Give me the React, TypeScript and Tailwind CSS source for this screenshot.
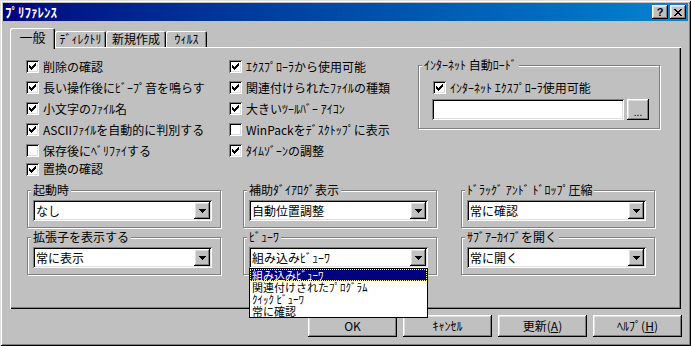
import React from 'react';

// win98 bevels
const raised = 'shadow-[inset_-1px_-1px_0_#000,inset_1px_1px_0_#fff,inset_-2px_-2px_0_#808080,inset_2px_2px_0_#dfdfdf]';
const sunken = 'shadow-[inset_1px_1px_0_#808080,inset_-1px_-1px_0_#fff,inset_2px_2px_0_#000,inset_-2px_-2px_0_#dfdfdf]';

const checkPx = [[6, 0, 1], [5, 1, 2], [0, 2, 1], [4, 2, 3], [0, 3, 2], [3, 3, 3], [0, 4, 5], [1, 5, 3], [2, 6, 1]];
const closePx = [[0, 0, 2], [6, 0, 2], [1, 1, 2], [5, 1, 2], [2, 2, 4], [3, 3, 2], [2, 4, 4], [1, 5, 2], [5, 5, 2], [0, 6, 2], [6, 6, 2]];
const arrowPx = [[0, 0, 7], [1, 1, 5], [2, 2, 3], [3, 3, 1]];

const Pixels: React.FC<{ px: number[][]; w: number; h: number }> = ({ px, w, h }) => (
  <svg width={w} height={h} viewBox={`0 0 ${w} ${h}`} shapeRendering="crispEdges">
    {px.map(([x, y, len], i) => (
      <rect key={i} x={x} y={y} width={len} height={1} fill="#000" />
    ))}
  </svg>
);

const Check: React.FC<{ checked: boolean }> = ({ checked }) => (
  <span className={`w-[13px] h-[13px] bg-white shrink-0 flex items-center justify-center ${sunken}`}>
    {checked && <Pixels px={checkPx} w={7} h={7} />}
  </span>
);

const CheckRow: React.FC<{ label: string; checked?: boolean; className?: string }> = ({ label, checked = true, className = 'h-[21px]' }) => (
  <div className={`flex items-center gap-[4px] whitespace-nowrap ${className}`}>
    <Check checked={checked} />
    <span>{label}</span>
  </div>
);

const Group: React.FC<{ label: string; className?: string; children?: React.ReactNode }> = ({ label, className = '', children }) => (
  <div className={`relative border border-[#808080] shadow-[1px_1px_0_#fff,inset_1px_1px_0_#fff] ${className}`}>
    <span className="absolute left-[3px] -top-[8px] bg-[#c0c0c0] px-[2px] whitespace-nowrap">{label}</span>
    {children}
  </div>
);

const Combo: React.FC<{ value: string; children?: React.ReactNode }> = ({ value, children }) => (
  <div className={`relative mt-[9px] ml-[5px] w-[179px] h-[21px] bg-white flex items-center pl-[3px] pr-[2px] ${sunken}`}>
    <span className="flex-1 whitespace-nowrap">{value}</span>
    <span className={`w-[16px] h-[17px] bg-[#c0c0c0] flex items-center justify-center ${raised}`}>
      <Pixels px={arrowPx} w={7} h={4} />
    </span>
    {children}
  </div>
);

const Button: React.FC<{ children: React.ReactNode; className?: string }> = ({ children, className = 'w-[89px] h-[22px]' }) => (
  <button className={`bg-[#c0c0c0] flex items-center justify-center shrink-0 ${raised} ${className}`}>{children}</button>
);

const viewerItems = ['組み込みﾋﾞｭｰﾜ', '関連付けされたﾌﾟﾛｸﾞﾗﾑ', 'ｸｲｯｸ ﾋﾞｭｰﾜ', '常に確認'];

export default function App() {
  return (
    <div className={`w-[691px] h-[346px] bg-[#c0c0c0] p-[3px] text-[12px] leading-[14px] text-black font-['Noto_Sans_CJK_JP',sans-serif] shadow-[inset_1px_1px_0_#dfdfdf,inset_-1px_-1px_0_#000,inset_2px_2px_0_#fff,inset_-2px_-2px_0_#808080]`}>
      {/* Title bar */}
      <div className="h-[18px] flex items-center bg-linear-to-r from-[#000080] to-[#1084d0] pl-[2px] pr-[2px]">
        <span className="flex-1 text-white font-bold text-[13px]">ﾌﾟﾘﾌｧﾚﾝｽ</span>
        <div className="flex gap-[2px]">
          <span className={`w-[16px] h-[14px] bg-[#c0c0c0] flex items-center justify-center font-bold text-[11px] leading-[11px] font-['Liberation_Sans',sans-serif] ${raised}`}>?</span>
          <span className={`w-[16px] h-[14px] bg-[#c0c0c0] flex items-center justify-center ${raised}`}>
            <Pixels px={closePx} w={8} h={7} />
          </span>
        </div>
      </div>

      <div className="px-[7px] pt-[7px]">
        {/* Tabs */}
        <div className="flex items-end h-[19px]">
          <div className="relative z-10 w-[45px] h-[21px] -mb-[2px] bg-[#c0c0c0] rounded-t-[2px] pt-[2px] text-center text-[13px] shadow-[inset_1px_1px_0_#fff,inset_-1px_0_0_#000,inset_-2px_0_0_#808080]">一般</div>
          <div className="w-[51px] h-[16px] pt-[1px] text-center rounded-t-[2px] shadow-[inset_1px_1px_0_#fff,inset_-1px_0_0_#000,inset_-2px_0_0_#808080]">ﾃﾞｨﾚｸﾄﾘ</div>
          <div className="w-[60px] h-[16px] pt-[1px] text-center rounded-t-[2px] shadow-[inset_1px_1px_0_#fff,inset_-1px_0_0_#000,inset_-2px_0_0_#808080]">新規作成</div>
          <div className="w-[41px] h-[16px] pt-[1px] text-center rounded-t-[2px] shadow-[inset_1px_1px_0_#fff,inset_-1px_0_0_#000,inset_-2px_0_0_#808080]">ｳｨﾙｽ</div>
        </div>

        {/* Panel */}
        <div className="relative h-[262px] shadow-[inset_1px_1px_0_#fff,inset_-1px_-1px_0_#000,inset_-2px_-2px_0_#808080]">
          <div className="flex pt-[9px] pl-[16px]">
            <div className="w-[203px] flex flex-col">
              <CheckRow label="削除の確認" />
              <CheckRow label="長い操作後にﾋﾞｰﾌﾟ音を鳴らす" />
              <CheckRow label="小文字のﾌｧｲﾙ名" />
              <CheckRow label="ASCIIﾌｧｲﾙを自動的に判別する" />
              <CheckRow label="保存後にﾍﾞﾘﾌｧｲする" checked={false} />
              <CheckRow label="置換の確認" className="h-[16px]" />
            </div>
            <div className="w-[189px] flex flex-col">
              <CheckRow label="ｴｸｽﾌﾟﾛｰﾗから使用可能" />
              <CheckRow label="関連付けられたﾌｧｲﾙの種類" />
              <CheckRow label="大きいﾂｰﾙﾊﾞｰ ｱｲｺﾝ" />
              <CheckRow label="WinPackをﾃﾞｽｸﾄｯﾌﾟに表示" checked={false} />
              <CheckRow label="ﾀｲﾑｿﾞｰﾝの調整" />
            </div>
            <Group label="ｲﾝﾀｰﾈｯﾄ 自動ﾛｰﾄﾞ" className="mt-[9px] w-[242px] h-[64px] pl-[13px] pt-[11px]">
              <CheckRow label="ｲﾝﾀｰﾈｯﾄ ｴｸｽﾌﾟﾛｰﾗ使用可能" className="h-[21px] ml-[1px]" />
              <div className="flex mt-[1px] gap-[3px]">
                <div className={`w-[192px] h-[21px] bg-white ${sunken}`} />
                <Button className="w-[22px] h-[21px] pt-[4px] text-[10px] leading-[10px]">...</Button>
              </div>
            </Group>
          </div>

          <div className="mt-[13px] pl-[17px] flex flex-col gap-[9px]">
            <div className="flex">
              <Group label="起動時" className="w-[194px] h-[38px]">
                <Combo value="なし" />
              </Group>
              <Group label="補助ﾀﾞｲｱﾛｸﾞ表示" className="ml-[22px] w-[194px] h-[38px]">
                <Combo value="自動位置調整" />
              </Group>
              <Group label="ﾄﾞﾗｯｸﾞ ｱﾝﾄﾞ ﾄﾞﾛｯﾌﾟ圧縮" className="ml-[24px] w-[194px] h-[38px]">
                <Combo value="常に確認" />
              </Group>
            </div>
            <div className="flex">
              <Group label="拡張子を表示する" className="w-[194px] h-[38px]">
                <Combo value="常に表示" />
              </Group>
              <Group label="ﾋﾞｭｰﾜ" className="relative z-20 ml-[22px] w-[194px] h-[38px]">
                <Combo value="組み込みﾋﾞｭｰﾜ">
                  {/* open drop list */}
                  <div className="absolute left-0 top-full w-full bg-white border border-black">
                    {viewerItems.map((item, i) => (
                      <div
                        key={item}
                        className={`h-[12px] text-[11px] leading-[12px] pl-[2px] whitespace-nowrap ${i === 0 ? 'bg-[#000080] text-white outline-1 outline-dotted outline-[#ffff7f] -outline-offset-1' : ''}`}
                      >
                        {item}
                      </div>
                    ))}
                  </div>
                </Combo>
              </Group>
              <Group label="ｻﾌﾞｱｰｶｲﾌﾞを開く" className="ml-[24px] w-[194px] h-[38px]">
                <Combo value="常に開く" />
              </Group>
            </div>
          </div>
        </div>

        {/* Bottom buttons */}
        <div className="flex justify-end gap-[6px] mt-[6px] -mr-[1px]">
          <Button>OK</Button>
          <Button>ｷｬﾝｾﾙ</Button>
          <Button>
            <span>更新(<span className="underline">A</span>)</span>
          </Button>
          <Button>
            <span>ﾍﾙﾌﾟ(<span className="underline">H</span>)</span>
          </Button>
        </div>
      </div>
    </div>
  );
}
